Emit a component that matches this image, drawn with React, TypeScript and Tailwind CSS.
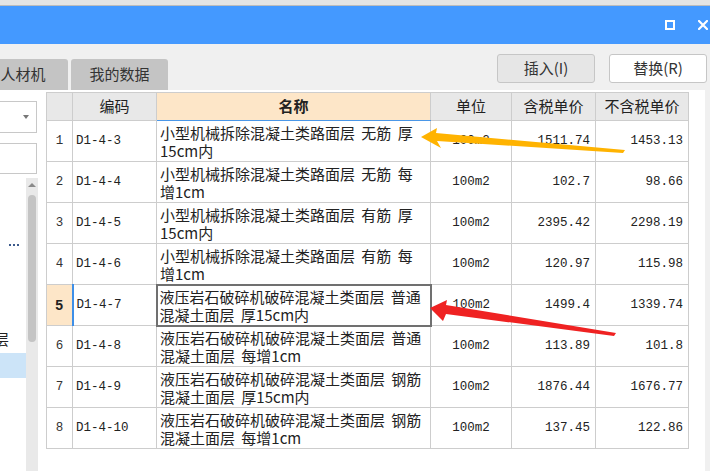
import React from "react";

const rows = [
  { n: 1, code: "D1-4-3", l1: "小型机械拆除混凝土类路面层 无筋 厚", l2: "15cm内", unit: "100m2", tax: "1511.74", notax: "1453.13" },
  { n: 2, code: "D1-4-4", l1: "小型机械拆除混凝土类路面层 无筋 每", l2: "增1cm", unit: "100m2", tax: "102.7", notax: "98.66" },
  { n: 3, code: "D1-4-5", l1: "小型机械拆除混凝土类路面层 有筋 厚", l2: "15cm内", unit: "100m2", tax: "2395.42", notax: "2298.19" },
  { n: 4, code: "D1-4-6", l1: "小型机械拆除混凝土类路面层 有筋 每", l2: "增1cm", unit: "100m2", tax: "120.97", notax: "115.98" },
  { n: 5, code: "D1-4-7", l1: "液压岩石破碎机破碎混凝土类面层 普通", l2: "混凝土面层 厚15cm内", unit: "100m2", tax: "1499.4", notax: "1339.74" },
  { n: 6, code: "D1-4-8", l1: "液压岩石破碎机破碎混凝土类面层 普通", l2: "混凝土面层 每增1cm", unit: "100m2", tax: "113.89", notax: "101.8" },
  { n: 7, code: "D1-4-9", l1: "液压岩石破碎机破碎混凝土类面层 钢筋", l2: "混凝土面层 厚15cm内", unit: "100m2", tax: "1876.44", notax: "1676.77" },
  { n: 8, code: "D1-4-10", l1: "液压岩石破碎机破碎混凝土类面层 钢筋", l2: "混凝土面层 每增1cm", unit: "100m2", tax: "137.45", notax: "122.86" },
];

const mono = "font-['Liberation_Mono',monospace] text-[12.5px]";

export default function App() {
  return (
    <div className="relative w-[710px] h-[471px] overflow-hidden bg-[#f0f0f0] font-['Noto_Sans_CJK_SC',sans-serif] text-[#222]">
      {/* top strip + title bar */}
      <div className="h-[6px] bg-[#e4e4e4] border-b border-[#bcbcbc]" />
      <div className="h-[38px] bg-[#4499ff] flex items-center justify-end pr-[2px] gap-[23px]">
        <div className="w-[10px] h-[10px] border-2 border-white" />
        <svg width="10" height="10" viewBox="0 0 10 10">
          <path d="M1 1 L9 9 M9 1 L1 9" stroke="white" strokeWidth="2.2" strokeLinecap="square" />
        </svg>
      </div>

      {/* toolbar */}
      <div className="h-[46px] flex justify-between">
        <div className="flex gap-[3px] mt-[15px] -ml-[22px]">
          <div className="w-[90px] h-[31px] rounded-t-[3px] bg-[#c4c4c4] flex items-center justify-center text-[15px] text-[#333]">
            人材机
          </div>
          <div className="w-[97px] h-[31px] rounded-t-[3px] bg-[#c4c4c4] flex items-center justify-center text-[15px] text-[#333]">
            我的数据
          </div>
        </div>
        <div className="flex gap-[14px] mt-[10px] mr-[3px]">
          <button className="w-[98px] h-[29px] rounded-[3px] border border-[#c6c6c6] bg-[#e6e6e6] text-[15px] text-[#333]">
            插入(I)
          </button>
          <button className="w-[98px] h-[29px] rounded-[3px] border border-[#c6c6c6] bg-white text-[15px] text-[#333]">
            替换(R)
          </button>
        </div>
      </div>

      {/* main */}
      <div className="flex h-[381px]">
        <div className="flex w-[705px] bg-white">
          {/* left panel */}
          <div className="w-[46px] flex flex-col shrink-0">
            <div className="mt-[11px] w-[37px] h-[32px] border border-l-0 border-[#c8c8c8] flex items-center justify-end pr-[7px]">
              <div className="w-0 h-0 border-l-[3px] border-r-[3px] border-t-[4px] border-l-transparent border-r-transparent border-t-[#777]" />
            </div>
            <div className="mt-[10px] w-[37px] h-[31px] border border-l-0 border-[#c8c8c8]" />
            <div className="mt-[4px] flex flex-1">
              <div className="w-[26px] flex flex-col overflow-hidden">
                <div className="mt-[61px] h-[12px] flex items-center gap-[2px] pl-[9px]">
                  <div className="w-[2px] h-[2px] bg-[#3c5a8c]" />
                  <div className="w-[2px] h-[2px] bg-[#3c5a8c]" />
                  <div className="w-[2px] h-[2px] bg-[#3c5a8c]" />
                </div>
                <div className="mt-[80px] h-[16px] -ml-[6px] text-[15px] leading-[16px] text-[#222]">层</div>
                <div className="mt-[6px] h-[25px] bg-[#cce4f8]" />
              </div>
              <div className="w-[12px] bg-[#e9e9e9] flex flex-col items-center">
                <div className="mt-[5px] w-0 h-0 border-l-[4px] border-r-[4px] border-b-[4px] border-l-transparent border-r-transparent border-b-[#8a8a8a]" />
                <div className="mt-[8px] w-[8px] h-[147px] rounded-full bg-[#c4c4c4]" />
              </div>
            </div>
          </div>

          {/* table */}
          <div className="pt-[2px]">
            <table className="table-fixed border-collapse w-[642px]">
              <colgroup>
                <col className="w-[26px]" />
                <col className="w-[84px]" />
                <col className="w-[274px]" />
                <col className="w-[81px]" />
                <col className="w-[84px]" />
                <col className="w-[93px]" />
              </colgroup>
              <thead>
                <tr className="h-[28px] text-[15px]">
                  <th className="border border-[#cdcdcd] bg-[#e8e8e8]" />
                  <th className="border border-[#cdcdcd] bg-[#e8e8e8] font-normal">编码</th>
                  <th className="border border-[#cdcdcd] border-b-[#4a97e8] bg-[#fde6c8] font-bold">名称</th>
                  <th className="border border-[#cdcdcd] bg-[#e8e8e8] font-normal">单位</th>
                  <th className="border border-[#cdcdcd] bg-[#e8e8e8] font-normal">含税单价</th>
                  <th className="border border-[#cdcdcd] bg-[#e8e8e8] font-normal">不含税单价</th>
                </tr>
              </thead>
              <tbody>
                {rows.map((r) => {
                  const sel = r.n === 5;
                  return (
                    <tr key={r.n} className="h-[41px]">
                      <td
                        className={
                          sel
                            ? "border border-[#cdcdcd] border-r-2 border-r-[#3d8fe8] bg-[#fde6c8] text-center font-['Liberation_Sans',sans-serif] text-[14px] font-bold"
                            : `border border-[#cdcdcd] text-center ${mono} text-[#333]`
                        }
                      >
                        {r.n}
                      </td>
                      <td className={`border border-[#cdcdcd] pl-[3px] ${mono}`}>{r.code}</td>
                      <td
                        className={
                          sel
                            ? "border-2 border-[#707070] pl-[2px] pt-[2px] text-[15px] leading-[18px] whitespace-nowrap [word-spacing:3px]"
                            : "border border-[#cdcdcd] pl-[3px] pt-[2px] text-[15px] leading-[18px] whitespace-nowrap [word-spacing:3px]"
                        }
                      >
                        <div>{r.l1}</div>
                        <div>{r.l2}</div>
                      </td>
                      <td className={`border border-[#cdcdcd] text-center ${mono}`}>{r.unit}</td>
                      <td className={`border border-[#cdcdcd] text-right pr-[5px] ${mono}`}>{r.tax}</td>
                      <td className={`border border-[#cdcdcd] text-right pr-[5px] ${mono}`}>{r.notax}</td>
                    </tr>
                  );
                })}
              </tbody>
            </table>
          </div>
        </div>
      </div>

      {/* annotation arrows */}
      <svg className="absolute inset-0 pointer-events-none" width="710" height="471" viewBox="0 0 710 471">
        <polygon
          points="421,137 437,128 436,133 625,150 623,153 437,141 441,148"
          fill="#ffb300"
        />
        <polygon
          points="430,308 447,300 446,305 616,333 614,336 446,314 443,321"
          fill="#ef2222"
        />
      </svg>
    </div>
  );
}
